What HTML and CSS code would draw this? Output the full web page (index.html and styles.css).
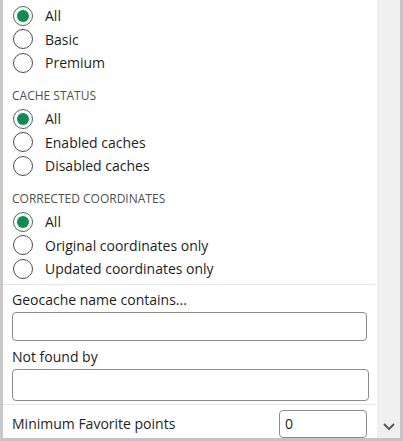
FILE: index.html
```html
<!DOCTYPE html>
<html>
<head>
<meta charset="utf-8">
<link rel="stylesheet" href="styles.css">
</head>
<body>
<div class="frame">
  <div class="content">
    <div class="group first">
      <label class="radio checked"><span class="dot"></span>All</label>
      <label class="radio"><span class="dot"></span>Basic</label>
      <label class="radio"><span class="dot"></span>Premium</label>
    </div>
    <div class="group">
      <div class="heading">CACHE STATUS</div>
      <label class="radio checked"><span class="dot"></span>All</label>
      <label class="radio"><span class="dot"></span>Enabled caches</label>
      <label class="radio"><span class="dot"></span>Disabled caches</label>
    </div>
    <div class="group">
      <div class="heading">CORRECTED COORDINATES</div>
      <label class="radio checked"><span class="dot"></span>All</label>
      <label class="radio"><span class="dot"></span>Original coordinates only</label>
      <label class="radio"><span class="dot"></span>Updated coordinates only</label>
    </div>
    <div class="divider"></div>
    <div class="field first-field">
      <div class="label">Geocache name contains...</div>
      <div class="input"></div>
    </div>
    <div class="field second-field">
      <div class="label">Not found by</div>
      <div class="input tall"></div>
    </div>
    <div class="divider"></div>
    <div class="inline-field">
      <div class="label">Minimum Favorite points</div>
      <div class="input small">0</div>
    </div>
  </div>
  <div class="scrollbar">
    <svg class="chevron" width="12" height="8" viewBox="0 0 12 8"><path d="M1 1 L6 6 L11 1" fill="none" stroke="#5a5a5a" stroke-width="2"/></svg>
  </div>
</div>
</body>
</html>
```

FILE: styles.css
```css
html, body {
  margin: 0;
  padding: 0;
  background: #ffffff;
}
body {
  font-family: "Open Sans", "Noto Sans", sans-serif;
  font-size: 14px;
  color: #1e1e1e;
}
.frame {
  box-sizing: border-box;
  width: 403px;
  height: 441px;
  border-left: 3px solid #c9c9c9;
  border-right: 3px solid #c4c4c4;
  border-bottom: 3px solid #c4c4c4;
  display: flex;
  overflow: hidden;
}
.content {
  width: 374px;
  flex: none;
  overflow: hidden;
}
.scrollbar {
  flex: 1;
  background: #f0f0f0;
  display: flex;
  flex-direction: column;
  justify-content: flex-end;
  align-items: center;
  padding-bottom: 7px;
}
.group.first {
  padding-top: 4px;
}
.heading {
  box-sizing: border-box;
  height: 32.5px;
  padding: 13.5px 0 0 9px;
  font-size: 12px;
  line-height: 16px;
  color: #505050;
}
.radio {
  display: flex;
  align-items: center;
  height: 23.5px;
  padding-left: 10px;
  gap: 12px;
}
.dot {
  box-sizing: border-box;
  width: 20px;
  height: 20px;
  border: 1px solid #4d4d4d;
  border-radius: 50%;
  display: flex;
  align-items: center;
  justify-content: center;
  flex: none;
}
.checked .dot {
  border-color: #3f6e58;
}
.checked .dot::after {
  content: "";
  width: 12px;
  height: 12px;
  border-radius: 50%;
  background: #128a52;
}
.divider {
  height: 1px;
  background: #e6e6e6;
  margin-top: 3px;
  width: 372px;
}
.field {
  padding: 0 10px 0 9px;
}
.first-field {
  padding-top: 5px;
}
.second-field {
  padding-top: 6px;
  padding-right: 8px;
}
.label {
  line-height: 20px;
}
.input {
  box-sizing: border-box;
  margin-top: 2px;
  height: 29px;
  border: 1px solid #8c8c8c;
  border-radius: 4px;
  background: #fff;
}
.input.tall {
  height: 32px;
}
.inline-field {
  display: flex;
  align-items: center;
  justify-content: space-between;
  padding: 5px 10px 0 9px;
}
.input.small {
  width: 88px;
  height: 28px;
  margin-top: 0;
  padding-left: 5px;
  line-height: 26px;
}
.chevron {
  display: block;
}
```
